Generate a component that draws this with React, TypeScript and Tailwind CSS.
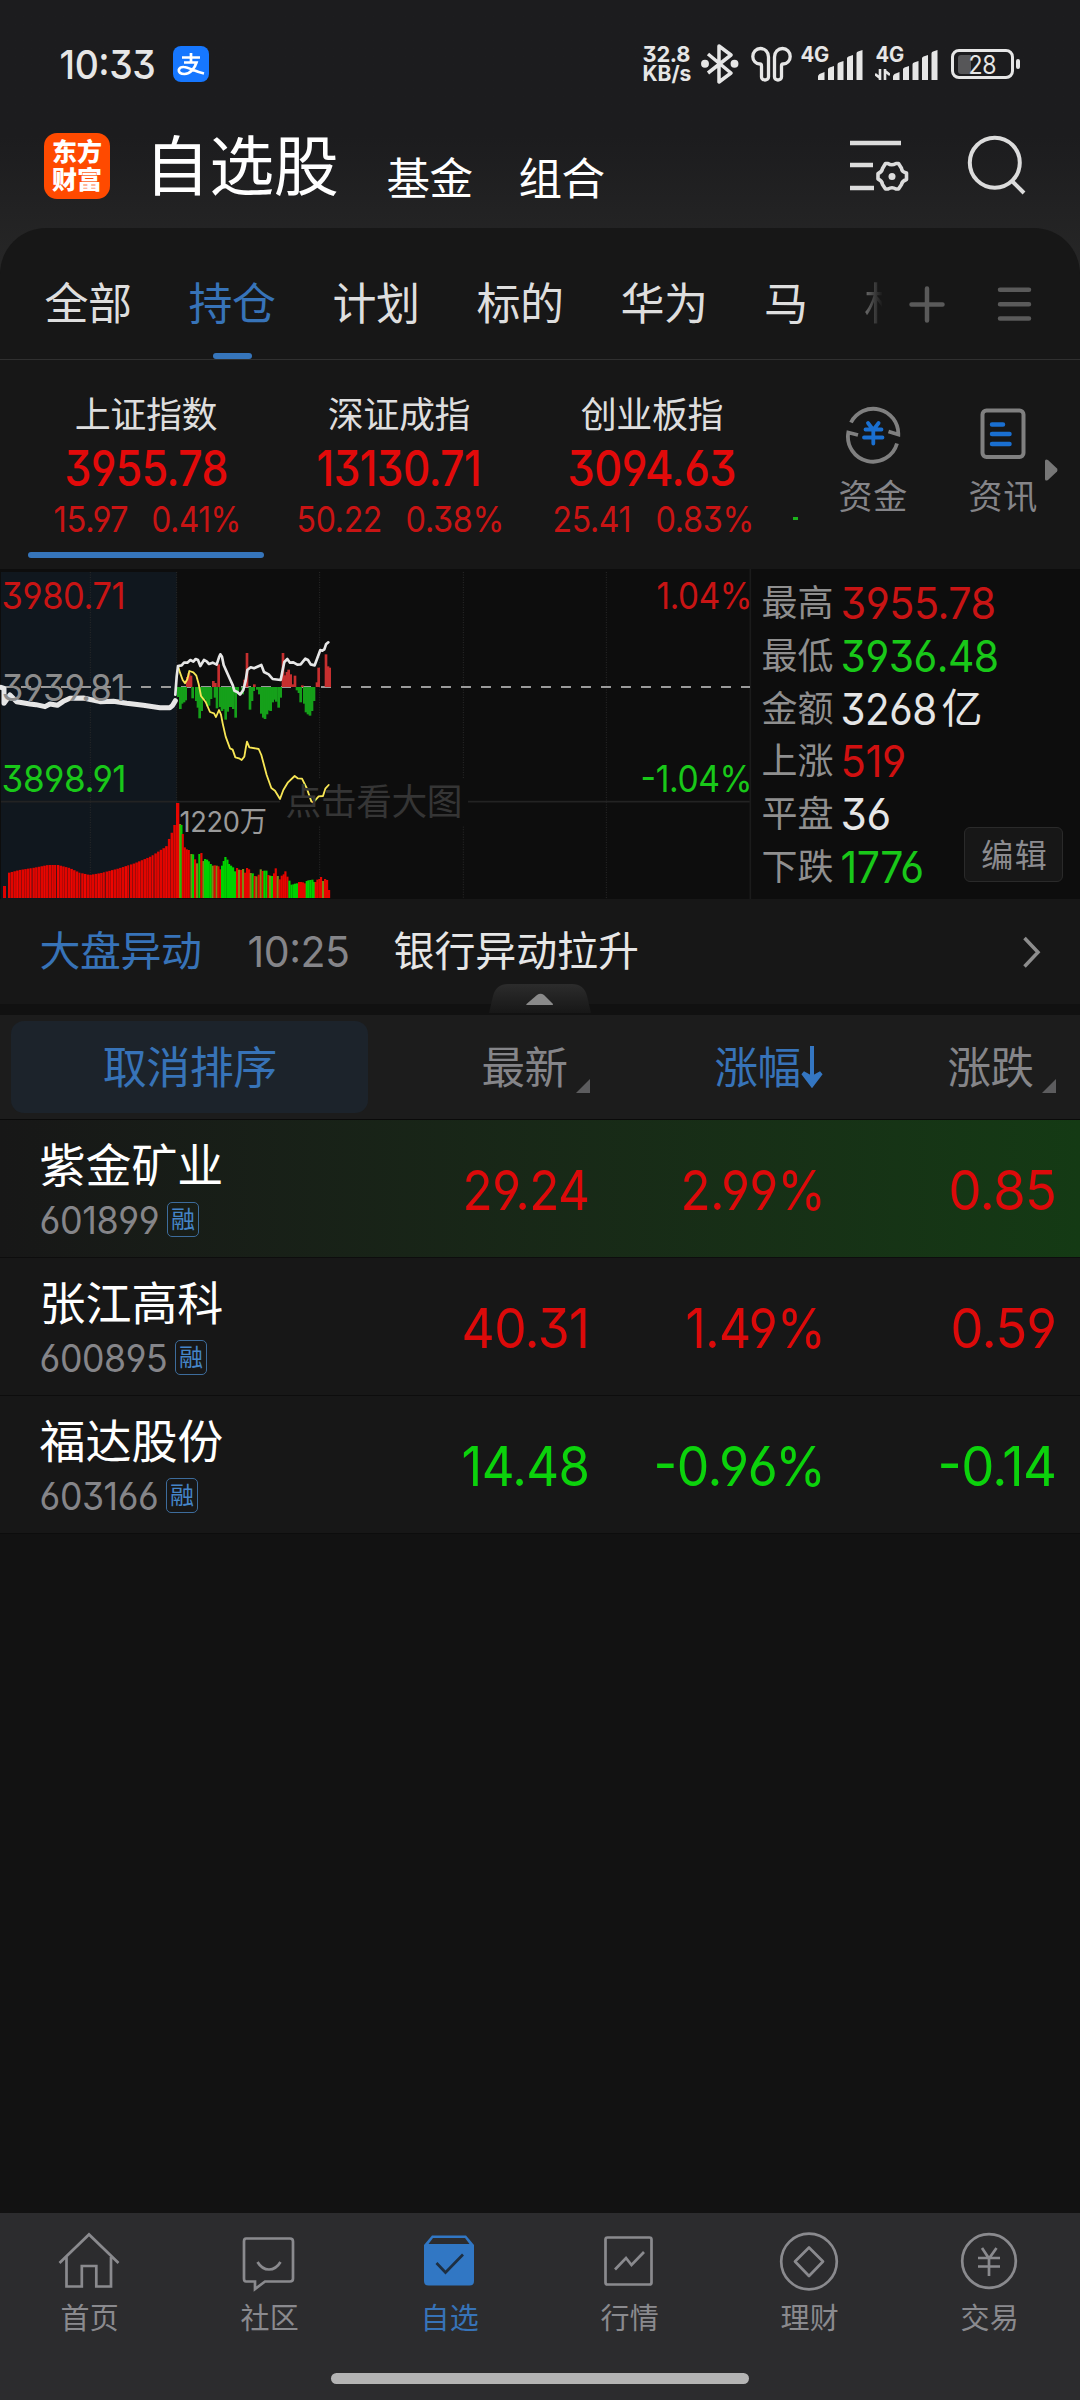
import { useLayoutEffect, useRef } from 'react';
import type { ReactNode } from 'react';
import clsx from 'clsx';

/** Text whose glyphs span `w` pixels: loose text is tracked out, wide text is condensed. */
function Fit({ w, className, children }: { w: number; className?: string; children: string }) {
  const ref = useRef<HTMLSpanElement>(null);
  useLayoutEffect(() => {
    const el = ref.current;
    if (!el) return;
    el.style.letterSpacing = '0px';
    el.style.transform = 'none';
    const natural = el.getBoundingClientRect().width;
    const size = parseFloat(getComputedStyle(el).fontSize);
    const n = Math.max(1, children.length - 1);
    const target = w + size * 0.08;
    const track = Math.max((target - natural) / n, -0.012 * size);
    const full = natural + n * track;
    const scale = Math.min(1, target / full);
    el.style.letterSpacing = `${track}px`;
    el.style.transform = `translate(0.6px, 1px) scaleX(${scale})`;
    el.style.marginRight = `${-track - (1 - scale) * full}px`;
  }, [w, children]);
  return (
    <span ref={ref} className={clsx('inline-block origin-left whitespace-nowrap', className)}>
      {children}
    </span>
  );
}

function SignalBars() {
  return (
    <svg width="45" height="30" viewBox="0 0 45 30" fill="#e6e6e6">
      <path d="M0 30V26.5Q0 25 1.5 24L6.500 22V30zM10 30V19.500Q10 18 11.500 17.500L16 16V30zM19.500 30V14.500Q19.500 13 21 12.500L25.500 11V30zM29 30V8.500Q29 7 30.500 6.500L35 5V30zM38.500 30V3.500Q38.500 2 40 1.500L44.500 0V30z" />
    </svg>
  );
}

function StatusBar() {
  return (
    <div className="flex h-[110px] items-start pt-[44px] text-[#e6e6e6]">
      <div className="ml-[59px] h-[42px] w-[114px] text-[40px] leading-[40px] font-medium">
        <Fit w={93}>10:33</Fit>
      </div>
      <div className="mt-[2px] flex h-9 w-9 items-center justify-center rounded-lg bg-[#1677ff]">
        <svg width="36" height="36" viewBox="0 0 36 36" fill="none" stroke="#fff" strokeWidth="2.700">
          <path d="M9 11.500h18M18 7v9M11 16.500h12.500c-1.500 5-6 11.500-12 11.500-4 0-6-1.800-5.700-4 .3-2 2.500-3.200 5-3C16 21.300 22 25.500 31 27.500" />
        </svg>
      </div>
      <div className="ml-[433px] flex h-[40px] w-[59px] flex-col items-start text-[22px] leading-[19px] font-bold">
        <Fit w={46}>32.8</Fit>
        <Fit w={47} className="text-[21px]">KB/s</Fit>
      </div>
      <svg width="38" height="40" viewBox="0 0 38 40" fill="none" stroke="#e6e6e6" strokeWidth="3.500" strokeLinejoin="round">
        <path d="M7 10l23 19-12 9V2l12 9L7 29" />
        <circle cx="4" cy="19.800" r="2.200" fill="#e6e6e6" />
        <circle cx="33.500" cy="19.800" r="2.200" fill="#e6e6e6" />
      </svg>
      <svg className="ml-[12px]" width="42" height="40" viewBox="0 0 42 40" fill="none" stroke="#e6e6e6" strokeWidth="3.300">
        <path d="M17.500 33V13c0-5-3.500-8.500-8-8.500S1.800 8 1.800 12.500 5 20 9 20c1.500 0 1.500.5 1.500 2v11c0 4 7 4 7 0zM23.500 33V13c0-5 3.500-8.500 8-8.500s7.700 3.500 7.700 8S36 20 32 20c-1.500 0-1.500.5-1.500 2v11c0 4-7 4-7 0z" />
      </svg>
      <div className="relative ml-[7px] h-[40px] w-[75px]">
        <div className="text-[21px] leading-[19px] font-bold"><Fit w={27}>4G</Fit></div>
        <div className="absolute top-[5.5px] left-[18px]"><SignalBars /></div>
      </div>
      <div className="relative h-[40px] w-[76px]">
        <div className="text-[21px] leading-[19px] font-bold"><Fit w={27}>4G</Fit></div>
        <svg className="absolute top-[25px] left-0" width="15" height="11" viewBox="0 0 15 11" fill="none" stroke="#e6e6e6" strokeWidth="2.600">
          <path d="M5 0v11M5 9L0 5M10 11V0M10 2l5 4" />
        </svg>
        <div className="absolute top-[5.5px] left-[18px]"><SignalBars /></div>
      </div>
      <div className="mt-[5px] flex items-center">
        <div className="flex h-[30px] w-[63px] items-center rounded-lg border-[3px] border-[#e6e6e6] pl-1">
          <div className="h-[19px] w-[13px] rounded-l-[3px] bg-[#565658]" />
          <div className="relative -ml-[3px] text-[25px] leading-[24px]"><Fit w={26}>28</Fit></div>
        </div>
        <div className="ml-[2px] h-[10px] w-1 rounded-sm bg-[#e6e6e6]" />
      </div>
    </div>
  );
}

function Header() {
  return (
    <div className="flex h-[118px] text-white">
      <div className="mt-[23px] ml-[44px] flex h-[66px] w-[66px] flex-col items-center justify-center rounded-[13px] bg-[#ff4a00] text-[25px] leading-[28px] font-black">
        <span>东方</span>
        <span>财富</span>
      </div>
      <div className="mt-[20px] ml-[34px] w-[242px] text-[65px] leading-[72px]"><Fit w={189}>自选股</Fit></div>
      <div className="mt-[43px] w-[132px] text-[44px] leading-[50px]"><Fit w={83}>基金</Fit></div>
      <div className="mt-[43px] w-[329px] text-[44px] leading-[50px]"><Fit w={83}>组合</Fit></div>
      <svg className="mt-[27px]" width="62" height="66" viewBox="0 0 62 66" fill="none" stroke="#dcdcdc">
        <path d="M3 6h51M3 28h23M3 51h24" strokeWidth="4.500" />
        <path d="M38.500 26.500h2.500q3.500 2.500 8 0h2.500l3 4.800q.3 3.500 5 4.700v6.500q-4.500 1.500-5 5l-3 4.500h-2.500q-4-2.500-8 0h-2.500l-3-4.500q-.5-4-4.500-5.500V36.500q4-1.200 4.500-5z" strokeWidth="3.600" strokeLinejoin="round" />
        <circle cx="45" cy="39.500" r="3.500" fill="#dcdcdc" stroke="none" />
      </svg>
      <svg className="mt-[22px] ml-[56px]" width="62" height="66" viewBox="0 0 62 66" fill="none" stroke="#dcdcdc" strokeWidth="4">
        <circle cx="29.800" cy="30.700" r="25" />
        <path d="M46.500 48.500L59 61" />
      </svg>
    </div>
  );
}

const GROUPS = ['全部', '持仓', '计划', '标的', '华为'];

function GroupTabs() {
  return (
    <div className="relative flex h-[132px] border-b border-[#303030] pt-[50px] text-[44px] leading-[50px] text-[#dedede]">
      <div className="w-[44px]" />
      {GROUPS.map((g, i) => (
        <div key={g} className={clsx('relative w-[144px]', i === 1 && 'text-[#3773b8]')}>
          <Fit w={84}>{g}</Fit>
          {i === 1 && <div className="absolute top-[75px] left-[25px] h-[6px] w-[39px] rounded-full bg-[#3675bb]" />}
        </div>
      ))}
      <div className="w-[100px] pt-px">马</div>
      <div className="w-[18px] overflow-hidden bg-gradient-to-r from-[#707070] to-[#1c1c1c] bg-clip-text pt-px whitespace-nowrap text-transparent">材</div>
      <svg className="mt-[4px] ml-[27px]" width="125" height="44" viewBox="0 0 125 44" stroke="#5a5a5a" strokeWidth="4.500" strokeLinecap="round">
        <path d="M2.500 22.500h31M18 6.500v32M91 7.800h29M91 22.300h29M91 36.500h29" />
      </svg>
    </div>
  );
}

const INDICES = [
  { name: '上证指数', value: '3955.78', vw: 160, diff: '15.97', dw: 72, pct: '0.41%', pw: 87, gap: 'gap-[23px]' },
  { name: '深证成指', value: '13130.71', vw: 161, diff: '50.22', dw: 83, pct: '0.38%', pw: 96, gap: 'gap-[23px]' },
  { name: '创业板指', value: '3094.63', vw: 165, diff: '25.41', dw: 76, pct: '0.83%', pw: 96, gap: 'gap-[24px]' },
];

function IndexStrip() {
  return (
    <div className="flex h-[209px]">
      <div className="ml-[19px] flex w-[779px] overflow-hidden">
        {INDICES.map((x, i) => (
          <div key={x.name} className="flex w-[253px] shrink-0 flex-col items-center">
            <div className="mt-[33px] h-[44px] text-[36px] leading-[42px] text-[#dedede]"><Fit w={140}>{x.name}</Fit></div>
            <div className="mt-[4px] h-[54px] text-[49px] leading-[54px] font-medium text-[#e20a0a]"><Fit w={x.vw}>{x.value}</Fit></div>
            <div className={clsx('mt-[4px] ml-[2px] flex h-[40px] text-[35.500px] leading-[40px] text-[#c81414]', x.gap)}>
              <Fit w={x.dw}>{x.diff}</Fit>
              <Fit w={x.pw}>{x.pct}</Fit>
            </div>
            {i === 0 && <div className="mt-[13px] h-[6px] w-[236px] rounded-full bg-[#3675bb]" />}
          </div>
        ))}
        <div className="mt-[157px] ml-[15px] h-[3px] w-[5px] shrink-0 bg-[#1cb31c]" />
      </div>
      <div className="flex w-[282px] text-[34px] leading-[40px] text-[#858589]">
        <div className="ml-[41px] w-[131px]">
          <svg className="mt-[44px] ml-[6px]" width="58" height="60" viewBox="0 0 58 60" fill="none" stroke="#808080" strokeWidth="3.800">
            <path d="M6 18.500A25 25 0 0 1 53.300 30.500L43.500 27.500M52 39.500A25 25 0 0 1 3.300 28.500L13 31" />
            <path d="M23 19l5.300 7 5.300-7M20.500 25.500h16M19 33.500h18.500M28.300 26v13.500" stroke="#1a6fd0" strokeLinecap="round" />
          </svg>
          <div className="-ml-px mt-[12px]"><Fit w={66}>资金</Fit></div>
        </div>
        <div className="w-[74px]">
          <svg className="mt-[44px] ml-[10px]" width="48" height="60" viewBox="0 0 48 60" fill="none" strokeLinecap="round">
            <rect x="2.500" y="6.500" width="41" height="46.500" rx="4" stroke="#808080" strokeWidth="4" />
            <path d="M12 20.500h11M12 30h17.500M12 40h17.500" stroke="#1a6fd0" strokeWidth="4.500" />
          </svg>
          <div className="-ml-[2px] mt-[12px]"><Fit w={66}>资讯</Fit></div>
        </div>
        <svg className="mt-[98px] ml-[1px]" width="13" height="24" viewBox="0 0 13 24" fill="#777"><path d="M0 3q0-2.500 3-1l9 8.500q1 1.500 0 3L3 22q-3 1.500-3-1z" /></svg>
      </div>
    </div>
  );
}

/* Chart drawing units: three per pixel. */
const PRE_LINE = '3,382 12,385 12,430 30,405 50,425 90,432 108,434 135,440 150,432 172,436 190,424 210,415 250,414 300,425 340,424 380,430 430,436 480,443 510,443 518,436 526,422';
const WHITE_LINE = '526,404 530,350 534,318 545,316 552,308 562,308 571,300 580,305 587,297 594,300 601,318 612,300 620,304 627,312 638,308 650,314 657,292 661,283 666,290 671,315 682,340 690,358 698,375 703,392 712,396 720,404 730,390 737,362 742,330 752,322 762,325 784,315 792,336 806,343 818,357 842,360 848,330 853,306 862,297 870,308 880,307 892,314 902,313 916,296 924,300 932,313 944,316 951,297 961,270 967,272 973,268 978,253 985,247';
const YELLOW_LINE = '534,318 540,338 548,360 555,370 562,358 568,333 580,337 589,347 596,372 603,408 617,426 630,456 642,460 648,471 657,450 663,464 668,490 677,530 690,565 698,569 706,592 717,595 725,600 733,590 738,560 741,545 748,562 776,567 784,585 792,615 800,645 814,684 825,692 840,717 850,690 864,667 884,648 893,655 906,656 920,684 934,724 940,727 956,709 969,708 976,686 986,675';

/* [x, height] of the bars above and under the previous close. */
const UP_BARS: number[][] = [[558, 30], [563, 42], [569, 34], [636, 18], [642, 12], [652, 68], [730, 22], [737, 102], [759, 8], [845, 102], [851, 35], [857, 45], [862, 52], [868, 38], [874, 8], [881, 34], [903, 5], [947, 14], [952, 58], [974, 98], [980, 62], [985, 58]];
const DOWN_BARS: number[][] = [[531, 30], [537, 66], [542, 50], [548, 46], [553, 40], [574, 34], [585, 42], [590, 62], [595, 94], [601, 72], [607, 38], [612, 38], [618, 58], [623, 56], [629, 36], [641, 32], [647, 64], [657, 60], [662, 72], [667, 66], [673, 98], [679, 74], [684, 60], [690, 60], [696, 66], [703, 92], [709, 20], [724, 22], [746, 68], [752, 42], [757, 12], [768, 8], [774, 22], [780, 80], [786, 92], [791, 96], [797, 82], [802, 70], [808, 72], [814, 46], [820, 38], [825, 44], [832, 62], [838, 32], [887, 10], [893, 18], [898, 46], [909, 50], [914, 76], [920, 82], [926, 86], [932, 72], [938, 42]];

/* Outline of the pre-market volume, sampled along x. */
const VOLUME_TOP: number[][] = [[24, 938], [55, 930], [100, 923], [140, 915], [170, 915], [205, 924], [235, 938], [265, 945], [300, 939], [350, 926], [400, 910], [450, 889], [480, 869], [495, 860], [502, 840], [510, 825], [518, 795], [526, 795]];
const volumeTop = (x: number) => {
  for (let i = 1; i < VOLUME_TOP.length; i++) {
    const [x1, y1] = VOLUME_TOP[i];
    const [x0, y0] = VOLUME_TOP[i - 1];
    if (x <= x1) return y0 + ((y1 - y0) * (x - x0)) / (x1 - x0);
  }
  return 795;
};
const PRE_VOLUME = Array.from({ length: 62 }, (_, i) => 24 + i * 8.13);

/* [x, y of the top, kind]: r rise, g fall, m mixed. */
const VOLUME: [number, number, string][] = [[528, 729, 'r'], [537, 792, 'm'], [541, 795, 'g'], [545, 822, 'r'], [551, 862, 'r'], [557, 868, 'r'], [563, 870, 'r'], [571, 882, 'm'], [576, 883, 'g'], [582, 898, 'r'], [588, 910, 'm'], [595, 882, 'g'], [601, 879, 'r'], [607, 903, 'm'], [612, 897, 'g'], [618, 899, 'g'], [623, 904, 'g'], [629, 912, 'g'], [635, 917, 'm'], [641, 916, 'r'], [647, 917, 'm'], [652, 919, 'r'], [658, 928, 'r'], [663, 917, 'g'], [668, 903, 'g'], [673, 891, 'g'], [679, 899, 'g'], [684, 912, 'g'], [690, 917, 'g'], [696, 922, 'g'], [702, 934, 'g'], [708, 924, 'r'], [714, 929, 'm'], [720, 930, 'r'], [726, 927, 'm'], [732, 938, 'r'], [738, 924, 'r'], [744, 928, 'r'], [749, 939, 'm'], [755, 940, 'g'], [761, 948, 'r'], [766, 949, 'm'], [773, 944, 'r'], [779, 928, 'm'], [785, 933, 'r'], [790, 932, 'g'], [796, 932, 'g'], [802, 945, 'r'], [807, 947, 'm'], [813, 948, 'g'], [819, 940, 'r'], [824, 925, 'r'], [830, 948, 'm'], [836, 958, 'r'], [842, 947, 'r'], [848, 943, 'r'], [853, 934, 'r'], [859, 950, 'r'], [865, 962, 'g'], [871, 974, 'g'], [877, 973, 'g'], [882, 971, 'g'], [888, 970, 'g'], [894, 966, 'r'], [900, 966, 'r'], [906, 967, 'r'], [912, 970, 'r'], [917, 963, 'g'], [922, 961, 'g'], [928, 960, 'g'], [934, 959, 'g'], [939, 966, 'g'], [944, 966, 'r'], [949, 959, 'r'], [955, 957, 'r'], [960, 951, 'r'], [966, 963, 'm'], [972, 957, 'r'], [978, 960, 'r'], [984, 990, 'r']];
const FILL: Record<string, string> = { r: '#e60500', g: '#00d200', m: '#7e8a14' };

function IntradayChart() {
  return (
    <div className="relative h-[330px] w-[752px] text-[37px] leading-[40px]">
      <svg className="block" width="752" height="330" viewBox="0 27 2256 990" fill="none">
        <rect x="3" y="36" width="527" height="981" fill="#10171e" />
        <g stroke="#2a2a2a" strokeWidth="3" strokeDasharray="3 4.500">
          <path d="M271 36V1014M530 36V1014M959 36V655M959 800V1014M1390 36V655M1390 800V1014M1819 36V1014" />
        </g>
        <path d="M3 725H840M1404 725H2250" stroke="#232323" strokeWidth="5" />
        <path d="M2251 27V1017" stroke="#1b1b1b" strokeWidth="5" />
        <path d="M3 381H2250" stroke="#9a9a9a" strokeWidth="6" strokeDasharray="30 30" />
        {UP_BARS.map(([x, h]) => <rect key={x} x={x} y={381 - h} width="8" height={h} fill="#c62f2f" />)}
        {DOWN_BARS.map(([x, h]) => <rect key={x} x={x} y={381} width="8" height={h} fill="#15a01a" />)}
        <rect x="9" y="978" width="9" height="36" fill="#d00" />
        {PRE_VOLUME.map((x, i) => <rect key={x} x={x} y={volumeTop(x)} width={i % 9 === 8 ? 6 : 7.5} height={1014 - volumeTop(x)} fill={i % 5 === 3 ? '#f00500' : '#e20500'} />)}
        {VOLUME.map(([x, y, k]) => <rect key={x} x={x} y={y} width={k === 'r' && y < 730 ? 10 : 6.5} height={1014 - y} fill={FILL[k]} />)}
      </svg>
      <div className="absolute top-[6px] left-px text-[#c81414]"><Fit w={121}>3980.71</Fit></div>
      <svg className="absolute inset-0" width="752" height="330" viewBox="0 27 2256 990" fill="none" strokeLinejoin="round" strokeLinecap="round">
        <polyline points={YELLOW_LINE} stroke="#f7e655" strokeWidth="5.500" />
        <polyline points={PRE_LINE} stroke="#e6e6e6" strokeWidth="15" />
        <polyline points={WHITE_LINE} stroke="#e6e6e6" strokeWidth="8" />
      </svg>
      <div className="absolute top-[98px] left-px text-[#8c8c8c]"><Fit w={121}>3939.81</Fit></div>
      <div className="absolute top-[189px] left-px text-[#19c819]"><Fit w={122}>3898.91</Fit></div>
      <div className="absolute top-[6px] right-0 text-[#c81414]"><Fit w={93}>1.04%</Fit></div>
      <div className="absolute top-[189px] right-0 text-[#19c819]"><Fit w={109}>-1.04%</Fit></div>
      <div className="absolute top-[232px] left-[179px] text-[29px] text-[#9a9a9a]"><Fit w={85}>1220万</Fit></div>
      <div className="absolute top-[212px] left-[285px] text-[36px] text-[#353535]"><Fit w={174}>点击看大图</Fit></div>
    </div>
  );
}

const STATS: { label: string; value: string; w: number; color: string; unit?: string }[] = [
  { label: '最高', value: '3955.78', w: 152, color: 'text-[#c81414]' },
  { label: '最低', value: '3936.48', w: 155, color: 'text-[#19c819]' },
  { label: '金额', value: '3268', w: 93, color: 'text-[#e6e6e6]', unit: '亿' },
  { label: '上涨', value: '519', w: 62, color: 'text-[#d01010]' },
  { label: '平盘', value: '36', w: 47, color: 'text-[#e6e6e6]' },
  { label: '下跌', value: '1776', w: 80, color: 'text-[#19c819]' },
];

function MarketPanel() {
  return (
    <div className="flex h-[330px] bg-[#0d0d0d]">
      <IntradayChart />
      <div className="relative w-[328px] pt-[7px]">
        {STATS.map((s) => (
          <div key={s.label} className="flex h-[52.700px] items-center leading-[52px]">
            <div className="ml-[9px] w-[79px] text-[36px] text-[#8f8f8f]"><Fit w={69}>{s.label}</Fit></div>
            <div className={clsx('flex items-center text-[44px]', s.color)}>
              <Fit w={s.w}>{s.value}</Fit>
              {s.unit && <span className="ml-[5px] text-[41px]">{s.unit}</span>}
            </div>
          </div>
        ))}
        <div className="absolute top-[258px] left-[212px] flex h-[55px] w-[99px] items-center justify-center rounded-md border border-[#2a2a2a] bg-[#171717] text-[32px] leading-[40px] text-[#8b8b8f]">
          <Fit w={63}>编辑</Fit>
        </div>
      </div>
    </div>
  );
}

function NewsRow() {
  return (
    <div className="relative h-[116px] border-b-[11px] border-[#111]">
      <div className="flex h-[105px] pt-[27px] text-[41px] leading-[48px] text-[#e6e6e6]">
        <div className="ml-[39px] w-[208px] text-[#3773b8]"><Fit w={159}>大盘异动</Fit></div>
        <div className="w-[146px] text-[43px] text-[#858589]"><Fit w={99}>10:25</Fit></div>
        <div className="w-[627px]"><Fit w={242}>银行异动拉升</Fit></div>
        <svg className="mt-[8px]" width="22" height="36" viewBox="0 0 22 36" fill="none" stroke="#8d8d8d" strokeWidth="3.500"><path d="M4.500 4L18 18.300 4.500 32.500" /></svg>
      </div>
      <svg className="absolute top-[85px] left-[489px]" width="102" height="30" viewBox="0 0 102 30">
        <defs>
          <linearGradient id="handle" x1="0" y1="0" x2="0" y2="1">
            <stop offset="0" stopColor="#2c2c2c" />
            <stop offset="1" stopColor="#171717" />
          </linearGradient>
        </defs>
        <path d="M0 29L4 12Q7 0 19 0H83Q95 0 98 12L102 29z" fill="url(#handle)" />
        <path d="M37.500 20L48 11q3.500-2.500 7 0l9 9q.5 1-1 1H38q-1.500 0-.5-1z" fill="#8a8a8a" />
      </svg>
    </div>
  );
}

const Corner = () => <div className="h-[14px] w-[14px] bg-[#5c5c5e] [clip-path:polygon(100%_0,100%_100%,0_100%)]" />;

function TableHeader() {
  return (
    <div className="flex h-[105px] border-b border-[#0a0a0a] bg-[#1c1c1c] text-[44px] text-[#858589]">
      <div className="mt-[6px] ml-[11px] flex h-[92px] w-[357px] items-center justify-center rounded-[13px] bg-[#1c232b] text-[#3773b8]"><Fit w={171}>取消排序</Fit></div>
      <div className="flex h-[104px] w-[222px] items-center justify-end gap-[8px]">
        <Fit w={83}>最新</Fit>
        <div className="pt-[38px]"><Corner /></div>
      </div>
      <div className="flex h-[104px] w-[233px] items-center justify-end text-[#3773b8]">
        <Fit w={83}>涨幅</Fit>
        <svg width="22" height="44" viewBox="0 0 22 44"><path d="M11 1V38M2 28l9 12 9-12-9 5z" stroke="#3476c2" strokeWidth="4" fill="#3476c2" /></svg>
      </div>
      <div className="flex h-[104px] w-[233px] items-center justify-end gap-[8px]">
        <Fit w={83}>涨跌</Fit>
        <div className="pt-[38px]"><Corner /></div>
      </div>
    </div>
  );
}

type Cell = [string, number];
const STOCKS: { name: string; code: Cell; price: Cell; pct: Cell; diff: Cell; color: string; flash?: boolean }[] = [
  { name: '紫金矿业', code: ['601899', 117], price: ['29.24', 123], pct: ['2.99%', 141], diff: ['0.85', 104], color: 'text-[#dc0a0a]', flash: true },
  { name: '张江高科', code: ['600895', 125], price: ['40.31', 124], pct: ['1.49%', 136], diff: ['0.59', 102], color: 'text-[#dc0a0a]' },
  { name: '福达股份', code: ['603166', 116], price: ['14.48', 124], pct: ['-0.96%', 168], diff: ['-0.14', 115], color: 'text-[#0cd20c]' },
];

function StockRows() {
  return (
    <div>
      {STOCKS.map((s) => (
        <div key={s.name} className={clsx('flex h-[138px] border-b border-[#0d0d0d]', s.flash ? 'bg-gradient-to-r from-[#171717] to-[#143a14]' : 'bg-[#171717]')}>
          <div className="ml-[39px] w-[329px]">
            <div className="mt-[17px] h-[56px] text-[46px] leading-[54px] text-white"><Fit w={180}>{s.name}</Fit></div>
            <div className="mt-[6px] flex items-center gap-[8px] text-[38px] leading-[40px] text-[#858589]">
              <Fit w={s.code[1]}>{s.code[0]}</Fit>
              <div className="flex h-[35px] w-[32px] items-center justify-center rounded-[5px] border border-[#3d6c9c] text-[24px] leading-[33px] text-[#4585c8]">融</div>
            </div>
          </div>
          <div className={clsx('flex items-center text-[55.500px]', s.color)}>
            <div className="flex w-[221px] justify-end"><Fit w={s.price[1]}>{s.price[0]}</Fit></div>
            <div className="flex w-[236px] justify-end"><Fit w={s.pct[1]}>{s.pct[0]}</Fit></div>
            <div className="flex w-[231px] justify-end"><Fit w={s.diff[1]}>{s.diff[0]}</Fit></div>
          </div>
        </div>
      ))}
    </div>
  );
}

const NAV: { label: string; icon: ReactNode; active?: boolean }[] = [
  { label: '首页', icon: <path d="M1.500 33L31 4.500 60.500 33M8.500 27v29.500h15.300V36h14.500v20.500h14.700V27" /> },
  { label: '社区', icon: <><path d="M8 8.500h44q3 0 3 3v37q0 3-3 3H27L17 59v-7.500H8q-2 0-2-3v-37q0-3 2-3z" /><path d="M19.500 32q4.500 7.500 11.500 7.500T42.500 32" /></> },
  {
    label: '自选',
    active: true,
    icon: (
      <>
        <path d="M6 15L14 5.500H48L56 15V51q0 4.500-4.500 4.500H10.500Q6 55.500 6 51z" fill="#3177c4" stroke="none" />
        <path d="M10.500 14L15 8H47L51.500 14z" fill="#2c2c2e" stroke="none" />
        <path d="M18.500 33L27.500 42.500 45 24.500" stroke="#1e2f42" />
      </>
    ),
  },
  { label: '行情', icon: <><rect x="7.500" y="7.500" width="46" height="47" rx="2" /><path d="M17 39.500L28 28l5.500 7L46 22" /></> },
  { label: '理财', icon: <><circle cx="31" cy="31.500" r="27.800" /><path d="M31 17.500L45 31.500 31 46 17 31.500z" strokeLinejoin="round" /></> },
  { label: '交易', icon: <><circle cx="31" cy="31" r="26.800" /><path d="M24 18l7 10.500L38.500 18M20 28h22M20 36.500h22M31 27.500V46" /></> },
];

function BottomNav() {
  return (
    <div className="h-[187px] bg-[#2c2c2e]">
      <div className="flex h-[160px] pt-[17px]">
        {NAV.map((n) => (
          <div key={n.label} className={clsx('flex w-[180px] flex-col items-center text-[29px] leading-[36px]', n.active ? 'text-[#3773b8]' : 'text-[#8a8a8e]')}>
            <svg className="-ml-[2px]" width="62" height="62" viewBox="0 0 62 62" fill="none" stroke="currentColor" strokeWidth="2.700">{n.icon}</svg>
            <div className="-ml-[2px] mt-[8px]"><Fit w={56}>{n.label}</Fit></div>
          </div>
        ))}
      </div>
      <div className="mx-auto h-[11px] w-[418px] rounded-full bg-[#b4b4b4]" />
    </div>
  );
}

export default function App() {
  return (
    <div className="flex h-[2400px] w-[1080px] flex-col overflow-hidden bg-[#121212] font-[Inter,'Noto_Sans_CJK_SC',sans-serif] [font-feature-settings:'cv03','cv04','cv09','case']">
      <div className="bg-gradient-to-b from-[#1c1c1e] from-50% to-[#272727] pb-[44px]">
        <StatusBar />
        <Header />
      </div>
      <div className="-mt-[44px] rounded-t-[46px] bg-[#171717]">
        <GroupTabs />
        <IndexStrip />
        <MarketPanel />
        <NewsRow />
      </div>
      <TableHeader />
      <StockRows />
      <div className="flex-1" />
      <BottomNav />
    </div>
  );
}
